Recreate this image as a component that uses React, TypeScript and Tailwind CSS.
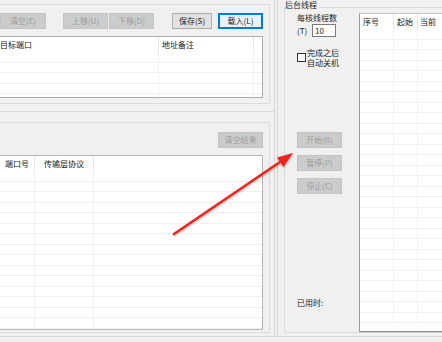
import React from "react";

type Col = { label: string; cls: string; align?: "left" | "center" };

function Btn({ label, cls, disabled, focused }: { label: string; cls: string; disabled?: boolean; focused?: boolean }) {
  const base = "flex items-center justify-center h-[16px] text-[8px] leading-[10px] shrink-0 ";
  const look = disabled
    ? "bg-[#cccccc] border border-[#c4c4c4] text-[#9c9c9c]"
    : focused
    ? "bg-[#e5f1fb] border border-[#0078d7] text-[#1a1a1a] shadow-[inset_0_0_0_1px_#0078d7]"
    : "bg-[#e1e1e1] border border-[#adadad] text-[#1a1a1a]";
  return <div className={base + look + " " + cls}>{label}</div>;
}

function ListView({ cols, rows, cls }: { cols: Col[]; rows: number; cls: string }) {
  return (
    <div className={"bg-white overflow-hidden flex flex-col " + cls}>
      <div className="flex h-[15px] shrink-0">
        {cols.map((c, i) => (
          <div
            key={i}
            className={
              "h-full flex items-center border-r border-[#e5e5e5] text-[#1a1a1a] shrink-0 " +
              (c.align === "center" ? "justify-center " : "") +
              c.cls
            }
          >
            {c.label}
          </div>
        ))}
      </div>
      {Array.from({ length: rows }).map((_, r) => (
        <div key={r} className="flex h-[10.5px] shrink-0 border-b border-[#f0f0f0]">
          {cols.map((c, i) => (
            <div key={i} className={"h-full border-r border-[#f0f0f0] shrink-0 " + c.cls} />
          ))}
        </div>
      ))}
    </div>
  );
}

export default function App() {
  return (
    <div className="relative w-[442px] h-[342px] overflow-hidden bg-[#f0f0f0] font-['Noto_Sans_CJK_SC','Noto_Sans',sans-serif] text-[8px] leading-[10px] text-[#1e1e1e]">
      <div className="flex h-[337px] border-b border-[#d9d9d9]">
        {/* Left column */}
        <div className="w-[274px] shrink-0 flex flex-col">
          <div className="h-[112px] border-b border-[#dadada]">
            <div className="ml-[-1px] mt-[4px] w-[271px] h-[100px] border border-[#dcdcdc] flex flex-col">
              <div className="mt-[8px] flex h-[16px]">
                <Btn label="清空(E)" cls="w-[46px]" disabled />
                <Btn label="上移(U)" cls="w-[45px] ml-[17px]" disabled />
                <Btn label="下移(D)" cls="w-[45px] ml-[1px]" disabled />
                <Btn label="保存(S)" cls="w-[40px] ml-[18px]" />
                <Btn label="载入(L)" cls="w-[45px] ml-[6px]" focused />
              </div>
              <ListView
                cls="mt-[7px] ml-[-1px] w-[264px] h-[62px] border border-[#a9acb4]"
                rows={6}
                cols={[
                  { label: "目标端口", cls: "w-[159px]" },
                  { label: "地址备注", cls: "w-[95px] pl-[3px]" },
                  { label: "", cls: "w-[20px]" },
                ]}
              />
            </div>
          </div>
          <div className="ml-[-1px] mt-[10px] w-[271px] h-[211px] border border-[#dcdcdc] flex flex-col">
            <div className="mt-[9px] flex justify-end pr-[6px]">
              <Btn label="清空结果" cls="w-[45px]" disabled />
            </div>
            <ListView
              cls="mt-[7px] ml-[-1px] w-[264px] h-[175px] border border-[#b4b7be]"
              rows={18}
              cols={[
                { label: "端口号", cls: "w-[35px]", align: "center" },
                { label: "传输层协议", cls: "w-[59px]", align: "center" },
                { label: "", cls: "w-[180px]" },
              ]}
            />
          </div>
        </div>

        {/* Splitter */}
        <div className="w-[4px] shrink-0 border-l border-r border-[#d6d6d6]" />

        {/* Right column */}
        <div className="flex-1 pl-[6px] overflow-hidden">
          <div className="relative mt-[7px] h-[326px] w-[200px] border-l border-t border-b border-[#dcdcdc] flex">
            <div className="absolute left-[0px] top-[-8px] bg-[#f0f0f0] pr-[1px] text-[#1a1a1a]">后台线程</div>
            <div className="w-[74px] shrink-0 pl-[12px] flex flex-col">
              <div className="mt-[5px] whitespace-nowrap">每核线程数</div>
              <div className="mt-[1px] flex items-center h-[13px]">
                <span className="w-[15px] shrink-0">(T)</span>
                <div className="w-[24px] h-[13px] border border-[#7a7a7a] bg-white pl-[2px] flex items-center">10</div>
              </div>
              <div className="mt-[11px] flex items-start">
                <div className="mt-[5px] w-[9px] h-[9px] border border-[#333333] bg-white shrink-0" />
                <div className="ml-[1px] leading-[10px] whitespace-nowrap">
                  <div>完成之后</div>
                  <div>自动关机</div>
                </div>
              </div>
              <Btn label="开始(B)" cls="w-[45px] mt-[64px]" disabled />
              <Btn label="暂停(P)" cls="w-[45px] mt-[7px]" disabled />
              <Btn label="停止(C)" cls="w-[45px] mt-[7px]" disabled />
              <div className="mt-[104px] whitespace-nowrap">已用时:</div>
            </div>
            <ListView
              cls="mt-[5px] h-[319px] w-[120px] border-l border-t border-b border-l-[#9a9a9a] border-t-[#c4c4c4] border-b-[#8f8f8f] shadow-[0_1px_0_#c8c8c8]"
              rows={28}
              cols={[
                { label: "序号", cls: "w-[34px] pl-[3px]" },
                { label: "起始", cls: "w-[24px] pl-[3px]" },
                { label: "当前", cls: "w-[40px] pl-[2px]" },
              ]}
            />
          </div>
        </div>
      </div>

      {/* Red annotation arrow */}
      <svg className="absolute inset-0 pointer-events-none" width="442" height="342" viewBox="0 0 442 342">
        <defs>
          <filter id="sh" x="-10%" y="-10%" width="120%" height="120%">
            <feDropShadow dx="0.5" dy="1" stdDeviation="0.8" floodColor="#000000" floodOpacity="0.3" />
          </filter>
        </defs>
        <g filter="url(#sh)">
          <line x1="174" y1="234" x2="283" y2="160" stroke="#e8261e" strokeWidth="2.6" strokeLinecap="round" />
          <polygon points="293,153 283.5,167 277,157.5" fill="#e8261e" />
        </g>
      </svg>
    </div>
  );
}
